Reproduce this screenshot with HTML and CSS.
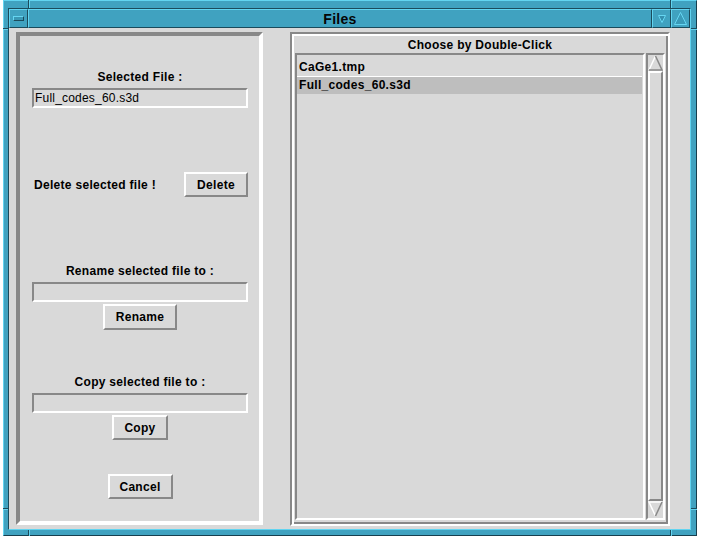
FILE: index.html
```html
<!DOCTYPE html>
<html>
<head>
<meta charset="utf-8">
<title>Files</title>
<link rel="stylesheet" href="styles.css">
</head>
<body>
<div class="window">
  <div class="frame-inner">
    <div class="titlebar">
      <div class="tb-btn tb-menu"><span class="menu-glyph"></span></div>
      <div class="tb-title">Files</div>
      <div class="tb-btn tb-min">
        <svg width="8" height="8" viewBox="0 0 8 8"><polygon points="0.5,0.5 7.5,0.5 4,7.5" fill="#3590ae" stroke="#66d6f2" stroke-width="1"/></svg>
      </div>
      <div class="tb-btn tb-max">
        <svg width="13" height="13" viewBox="0 0 13 13"><polygon points="6.5,0.5 12.5,12.5 0.5,12.5" fill="#3a9ab8" stroke="#66d6f2" stroke-width="1"/></svg>
      </div>
    </div>
    <div class="client">
      <div class="left-panel">
        <div class="label label-first">Selected File :</div>
        <div class="field">Full_codes_60.s3d</div>
        <div class="delete-row">
          <span class="label-inline">Delete selected file !</span>
          <button class="btn btn-delete">Delete</button>
        </div>
        <div class="label label-rename">Rename selected file to :</div>
        <div class="field"></div>
        <button class="btn btn-rename">Rename</button>
        <div class="label label-copy">Copy selected file to :</div>
        <div class="field"></div>
        <button class="btn btn-copy">Copy</button>
        <button class="btn btn-cancel">Cancel</button>
      </div>
      <div class="right-panel">
        <div class="list-title">Choose by Double-Click</div>
        <div class="list-wrap">
          <div class="list">
            <div class="item">CaGe1.tmp</div>
            <div class="item selected">Full_codes_60.s3d</div>
          </div>
          <div class="scrollbar">
            <div class="arrow arrow-up">
              <svg width="15" height="16" viewBox="0 0 15 16">
                <polygon points="7.5,1 14,15 1,15" fill="#d9d9d9"/>
                <polyline points="1,15 7.5,1" fill="none" stroke="#ffffff" stroke-width="1.5"/>
                <polyline points="7.5,1 14,15 1,15" fill="none" stroke="#888888" stroke-width="1.5"/>
              </svg>
            </div>
            <div class="slider"></div>
            <div class="arrow arrow-down">
              <svg width="15" height="17" viewBox="0 0 15 17">
                <polygon points="1,1 14,1 7.5,15" fill="#d9d9d9"/>
                <polyline points="7.5,15 1,1 14,1" fill="none" stroke="#ffffff" stroke-width="1.5"/>
                <polyline points="14,1 7.5,15" fill="none" stroke="#888888" stroke-width="1.5"/>
              </svg>
            </div>
          </div>
        </div>
      </div>
    </div>
  </div>
  <span class="mark mark-tl-v"></span>
  <span class="mark mark-tr-v"></span>
  <span class="mark mark-bl-v"></span>
  <span class="mark mark-br-v"></span>
  <span class="mark mark-lt-h"></span>
  <span class="mark mark-lb-h"></span>
  <span class="mark mark-rt-h"></span>
  <span class="mark mark-rb-h"></span>
</div>
</body>
</html>
```

FILE: styles.css
```css
html, body {
  margin: 0;
  padding: 0;
  background: #ffffff;
}

body {
  font-family: "Liberation Sans", Arial, sans-serif;
  font-size: 12px;
  color: #000;
}

.window {
  position: relative;
  box-sizing: border-box;
  width: 694px;
  height: 536px;
  margin-left: 3px;
  background: #40a2c0;
  border: 1px solid;
  border-color: #62d4f0 #173f4e #173f4e #62d4f0;
  padding: 7px 5px 5px 4px;
}

.frame-inner {
  height: 100%;
  box-sizing: border-box;
  border: 1px solid;
  border-color: #1b4b5c #62d4f0 #62d4f0 #1b4b5c;
  display: flex;
  flex-direction: column;
}

.titlebar {
  display: flex;
  height: 19px;
  flex: none;
}

.tb-btn,
.tb-title {
  box-sizing: border-box;
  height: 19px;
  border: 1px solid;
  border-color: #62d4f0 #1b4b5c #1b4b5c #62d4f0;
  background: #40a2c0;
  display: flex;
  align-items: center;
  justify-content: center;
}

.tb-btn {
  width: 19px;
  flex: none;
}

.tb-title {
  flex: 1;
  font-weight: bold;
  font-size: 14px;
  color: #050505;
  letter-spacing: 0.3px;
}

.menu-glyph {
  display: block;
  box-sizing: border-box;
  width: 11px;
  height: 5px;
  border: 1px solid;
  border-color: #66d6f2 #1b4b5c #1b4b5c #66d6f2;
  background: #3a98b5;
}

.tb-min svg {
  margin-top: 1px;
}

.client {
  flex: 1;
  background: #d9d9d9;
  display: grid;
  grid-template-columns: 247px 380px;
  column-gap: 27px;
  align-items: start;
  padding: 4px 0 0 7px;
}

/* ---------- left panel ---------- */
.left-panel {
  box-sizing: border-box;
  height: 493px;
  border: 4px solid;
  border-color: #888888 #ffffff #ffffff #888888;
  padding: 0 11px 0 12px;
  display: flex;
  flex-direction: column;
  align-items: center;
}

.label {
  font-weight: bold;
  letter-spacing: 0.3px;
  line-height: 15px;
  height: 14px;
  padding-top: 1px;
  text-align: center;
  white-space: nowrap;
}

.label-first { margin-top: 33px; }
.label-rename { margin-top: 66px; }
.label-copy { margin-top: 44px; }

.field {
  box-sizing: border-box;
  align-self: stretch;
  height: 20px;
  margin-top: 4px;
  border: 2px solid;
  border-color: #888888 #ffffff #ffffff #888888;
  padding: 0 1px;
  line-height: 16px;
  font-size: 12px;
  letter-spacing: 0.2px;
  white-space: nowrap;
}

.delete-row {
  align-self: stretch;
  display: flex;
  align-items: center;
  justify-content: space-between;
  margin-top: 64px;
  height: 25px;
}

.label-inline {
  font-weight: bold;
  letter-spacing: 0.3px;
  padding-left: 2px;
  white-space: nowrap;
}

.btn {
  box-sizing: border-box;
  height: 25px;
  margin: 0;
  padding: 0;
  background: #d9d9d9;
  border: 2px solid;
  border-color: #ffffff #888888 #888888 #ffffff;
  font-family: "Liberation Sans", Arial, sans-serif;
  font-size: 12px;
  font-weight: bold;
  letter-spacing: 0.3px;
  color: #000;
  flex: none;
}

.btn-delete { width: 64px; }
.btn-rename { width: 74px; height: 26px; margin-top: 2px; }
.btn-copy { width: 56px; margin-top: 2px; }
.btn-cancel { width: 65px; margin-top: 34px; }

/* ---------- right panel ---------- */
.right-panel {
  box-sizing: border-box;
  height: 494px;
  border: 2px solid;
  border-color: #888888 #ffffff #ffffff #888888;
  box-shadow: inset 2px 2px 0 #ffffff, inset -2px -2px 0 #888888;
  padding: 2px 2px 4px 2px;
  display: flex;
  flex-direction: column;
}

.list-title {
  height: 15px;
  line-height: 15px;
  padding-top: 2px;
  text-align: center;
  font-weight: bold;
  letter-spacing: 0.3px;
  flex: none;
}

.list-wrap {
  flex: 1;
  display: flex;
  gap: 1px;
  margin-left: 1px;
  margin-right: 1px;
  min-height: 0;
}

.list {
  box-sizing: border-box;
  width: 350px;
  border: 2px solid;
  border-color: #888888 #ffffff #ffffff #888888;
  padding: 3px 1px 0 0;
}

.item {
  box-sizing: border-box;
  height: 18px;
  line-height: 17px;
  border-top: 1px solid transparent;
  padding-left: 2px;
  font-weight: bold;
  letter-spacing: 0.3px;
  white-space: nowrap;
}

.item.selected {
  background: #bebebe;
  border-top-color: #ffffff;
}

.scrollbar {
  box-sizing: border-box;
  width: 19px;
  border: 2px solid;
  border-color: #888888 #ffffff #ffffff #888888;
  display: flex;
  flex-direction: column;
}

.arrow {
  flex: none;
  display: flex;
  justify-content: center;
}

.arrow svg {
  display: block;
}

.slider {
  flex: 1;
  box-sizing: border-box;
  border: 2px solid;
  border-color: #ffffff #888888 #888888 #ffffff;
}

/* ---------- frame resize-corner marks ---------- */
.mark {
  position: absolute;
  display: block;
  background: #1b4b5c;
}

.mark-tl-v { left: 24px; top: -1px; width: 1px; height: 8px; box-shadow: 1px 0 0 #62d4f0; }
.mark-tr-v { right: 25px; top: -1px; width: 1px; height: 8px; box-shadow: 1px 0 0 #62d4f0; }
.mark-bl-v { left: 24px; bottom: -1px; width: 1px; height: 6px; box-shadow: 1px 0 0 #62d4f0; }
.mark-br-v { right: 25px; bottom: -1px; width: 1px; height: 6px; box-shadow: 1px 0 0 #62d4f0; }
.mark-lt-h { left: -1px; top: 27px; width: 5px; height: 1px; box-shadow: 0 1px 0 #62d4f0; }
.mark-lb-h { left: -1px; bottom: 26px; width: 5px; height: 1px; box-shadow: 0 1px 0 #62d4f0; }
.mark-rt-h { right: -1px; top: 27px; width: 6px; height: 1px; box-shadow: 0 1px 0 #62d4f0; }
.mark-rb-h { right: -1px; bottom: 26px; width: 6px; height: 1px; box-shadow: 0 1px 0 #62d4f0; }
```
